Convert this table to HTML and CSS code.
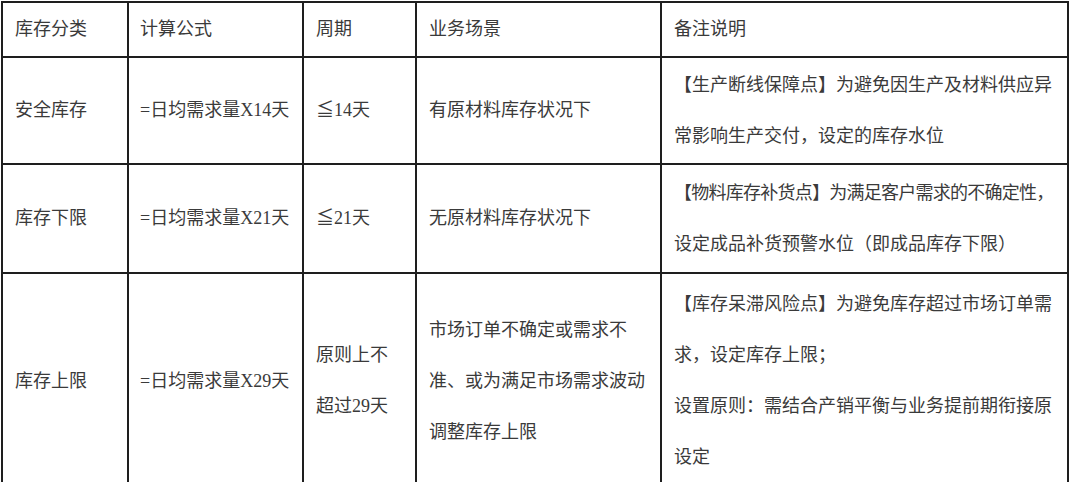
FILE: index.html
```html
<!DOCTYPE html>
<html lang="zh-CN">
<head>
<meta charset="utf-8">
<title>库存分类</title>
<link rel="stylesheet" href="styles.css">
</head>
<body>
<div class="sheet">
  <div class="cell head">库存分类</div>
  <div class="cell head formula">计算公式</div>
  <div class="cell head">周期</div>
  <div class="cell head">业务场景</div>
  <div class="cell head note">备注说明</div>

  <div class="cell r1">安全库存</div>
  <div class="cell r1 formula">=日均需求量X14天</div>
  <div class="cell r1">≦14天</div>
  <div class="cell r1">有原材料库存状况下</div>
  <div class="cell r1 note"><p>【生产断线保障点】为避免因生产及材料供应异常影响生产交付，设定的库存水位</p></div>

  <div class="cell r2">库存下限</div>
  <div class="cell r2 formula">=日均需求量X21天</div>
  <div class="cell r2">≦21天</div>
  <div class="cell r2">无原材料库存状况下</div>
  <div class="cell r2 note"><p><span class="tight">【物料库存补货点】为满足客户需求的不确定性，</span>设定成品补货预警水位（即成品库存下限）</p></div>

  <div class="cell r3">库存上限</div>
  <div class="cell r3 formula">=日均需求量X29天</div>
  <div class="cell r3"><p>原则上不超过29天</p></div>
  <div class="cell r3"><p>市场订单不确定或需求不准、或为满足市场需求波动调整库存上限</p></div>
  <div class="cell r3 note"><div><p>【库存呆滞风险点】为避免库存超过市场订单需求，设定库存上限；</p><p>设置原则：需结合产销平衡与业务提前期衔接原设定</p></div></div>
</div>
</body>
</html>
```
FILE: styles.css
```css
html, body {
  margin: 0;
  padding: 0;
  background: #ffffff;
}

body {
  font-family: "Liberation Serif", "Noto Sans CJK SC", serif;
  font-size: 18px;
  color: #3a3a3a;
  overflow: hidden;
}

.sheet {
  display: grid;
  grid-template-columns: 126px 175px 113px 245px 407px;
  grid-template-rows: 55px 107px 109px 216px;
  width: max-content;
  margin: 1px 0 0 1px;
  border-left: 2px solid #1e1e1e;
  border-top: 2px solid #1e1e1e;
}

.cell {
  box-sizing: border-box;
  display: flex;
  align-items: center;
  padding: 0 12px 0 12px;
  border-right: 2px solid #1e1e1e;
  border-bottom: 2px solid #1e1e1e;
  line-height: 51px;
  white-space: normal;
}

.cell.formula {
  padding-left: 11px;
  padding-right: 2px;
  white-space: nowrap;
}

.cell.note {
  padding-right: 4px;
}

.cell p {
  margin: 0;
}

.tight {
  letter-spacing: -0.75px;
}
```
